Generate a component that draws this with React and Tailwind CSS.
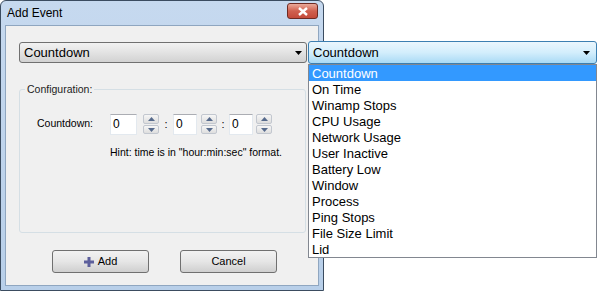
import React from 'react'

const items = [
  'Countdown', 'On Time', 'Winamp Stops', 'CPU Usage', 'Network Usage', 'User Inactive',
  'Battery Low', 'Window', 'Process', 'Ping Stops', 'File Size Limit', 'Lid',
]

function Arrow() {
  return (
    <svg width="7" height="4" viewBox="0 0 7 4"><path d="M0 0h7L3.5 4z" fill="#000" /></svg>
  )
}

function Spin({ gap }) {
  return (
    <div className={`flex flex-col w-[16px] h-[20px] gap-[1px] ${gap}`}>
      <div className="flex-1 flex items-center justify-center rounded-[2px] border border-[#c2c7cf] bg-gradient-to-b from-[#f6f6f6] to-[#dedede]">
        <svg width="7" height="4" viewBox="0 0 7 4"><path d="M0 4h7L3.5 0z" fill="#566a8c" /></svg>
      </div>
      <div className="flex-1 flex items-center justify-center rounded-[2px] border border-[#c2c7cf] bg-gradient-to-b from-[#f6f6f6] to-[#dedede]">
        <svg width="7" height="4" viewBox="0 0 7 4"><path d="M0 0h7L3.5 4z" fill="#566a8c" /></svg>
      </div>
    </div>
  )
}

function NumField({ width, gap }) {
  return (
    <div className="flex items-center">
      <div className={`${width} h-[21px] bg-white border border-[#e3e9ef] border-t-[#abadb3] flex items-center pl-[2px] text-[12px] text-black`}>0</div>
      <Spin gap={gap} />
    </div>
  )
}

function Button({ children }) {
  return (
    <div className="w-[97px] h-[23px] rounded-[3px] border border-[#707070] bg-gradient-to-b from-[#f2f2f2] via-[#e6e6e6] to-[#cfcfcf] flex items-center justify-center gap-[4px] text-[11px] text-black">
      {children}
    </div>
  )
}

export default function App() {
  return (
    <div className="relative w-[597px] h-[292px] bg-white font-['Liberation_Sans',Arial,sans-serif] overflow-hidden">
      {/* dialog window */}
      <div className="w-[324px] h-[291px] border border-[#3b4c60] rounded-t-[6px] bg-gradient-to-b from-[#c6d9ef] to-[#b8cfe9] flex flex-col px-[4px] pb-[4px]">
        <div className="h-[24px] flex items-center justify-between pl-[2px]">
          <span className="text-[12px] text-black">Add Event</span>
          <div className="w-[31px] h-[16px] -mt-[4px] mr-[1px] rounded-[3px] border border-[#6e2a22] bg-gradient-to-b from-[#e9a99a] via-[#d0604f] to-[#c44a3a] flex items-center justify-center">
            <svg width="10" height="9" viewBox="0 0 10 9"><path d="M1 1l8 7M9 1l-8 7" stroke="#fff" strokeWidth="2.4" /></svg>
          </div>
        </div>
        <div className="flex-1 bg-[#f0f0f0] border border-[#8fa6c0] flex flex-col pl-[13px] pr-[10px] pt-[16px]">
          <div className="w-[288px] h-[21px] rounded-[3px] border border-[#707070] bg-gradient-to-b from-[#f2f2f2] via-[#e3e3e3] to-[#d2d2d2] flex items-center justify-between pl-[4px] pr-[4px] text-[13px] text-black">
            <span>Countdown</span>
            <Arrow />
          </div>
          <fieldset className="mt-[19px] w-[287px] h-[151px] border border-[#d5dfe5] rounded-[3px] px-0">
            <legend className="ml-[5px] px-[2px] text-[10.5px] text-[#222]">Configuration:</legend>
            <div className="flex items-center mt-[16px] pl-[17px] text-[10.5px] text-black">
              <span className="w-[73px]">Countdown:</span>
              <NumField width="w-[27px]" gap="ml-[6px]" />
              <span className="w-[14px] text-center text-[11px]">:</span>
              <NumField width="w-[24px]" gap="ml-[4px]" />
              <span className="w-[12px] text-center text-[11px]">:</span>
              <NumField width="w-[24px]" gap="ml-[3px]" />
            </div>
            <div className="mt-[10px] pl-[90px] text-[10.5px] text-black">Hint: time is in "hour:min:sec" format.</div>
          </fieldset>
          <div className="flex gap-[31px] pl-[33px] mt-[17px]">
            <Button>
              <svg width="10" height="10" viewBox="0 0 10 10"><path d="M3.5 0h3v3.5H10v3H6.5V10h-3V6.5H0v-3h3.5z" fill="#5c5f9c" /></svg>
              <span>Add</span>
            </Button>
            <Button>Cancel</Button>
          </div>
        </div>
      </div>

      {/* open dropdown */}
      <div className="absolute left-[308px] top-[41px] w-[289px]">
        <div className="h-[23px] rounded-[3px] border border-[#3c7fb1] bg-gradient-to-b from-[#eaf6fd] via-[#d3eefc] to-[#a9daf5] flex items-center justify-between pl-[4px] pr-[6px] text-[13px] text-black">
          <span>Countdown</span>
          <Arrow />
        </div>
        <div className="w-[289px] border border-[#828790] bg-white">
          {items.map((it, i) => (
            <div key={it} className={`h-[16px] flex items-center pl-[3px] text-[13px] leading-none ${i === 0 ? 'bg-[#3399ff] text-white' : 'text-black'}`}>{it}</div>
          ))}
        </div>
      </div>
    </div>
  )
}
